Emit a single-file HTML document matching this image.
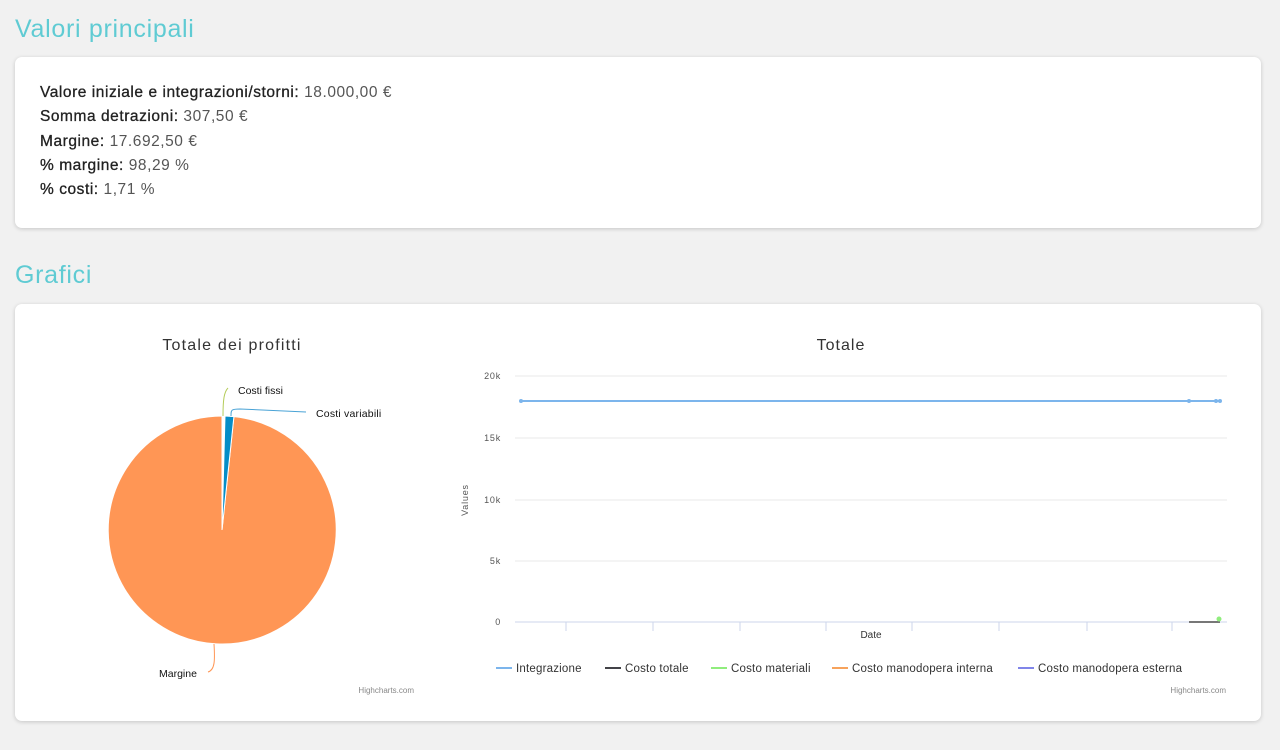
<!DOCTYPE html>
<html><head><meta charset="utf-8"><style>
body{margin:0;background:#f1f1f1;font-family:"Liberation Sans",sans-serif;width:1280px;height:750px;overflow:hidden;position:relative}
h2{position:absolute;left:15px;margin:0;font-weight:normal;color:#5fcbd3;font-size:25px;letter-spacing:.7px}
.card{position:absolute;left:15px;width:1246px;background:#fff;border-radius:7px;box-shadow:0 1px 4px rgba(0,0,0,.18)}
.v{position:absolute;left:40px;top:81px;font-size:15.5px;line-height:24.3px;color:#555;letter-spacing:.55px}
.v b{color:#222;font-weight:normal;-webkit-text-stroke:.3px #222}
svg text{font-family:"Liberation Sans",sans-serif}
</style></head><body>
<h2 style="top:15px">Valori principali</h2>
<div class="card" style="top:57px;height:171px"></div>
<div class="v">
<div><b>Valore iniziale e integrazioni/storni:</b> 18.000,00 €</div>
<div><b>Somma detrazioni:</b> 307,50 €</div>
<div><b>Margine:</b> 17.692,50 €</div>
<div><b>% margine:</b> 98,29 %</div>
<div><b>% costi:</b> 1,71 %</div>
</div>
<h2 style="top:261px">Grafici</h2>
<div class="card" style="top:304px;height:417px"></div>
<svg width="1280" height="750" style="position:absolute;left:0;top:0">
<text x="232" y="350" font-size="16" fill="#333" text-anchor="middle" letter-spacing="1.2">Totale dei profitti</text>
<path d="M222,530 L233.9,416.6 A114,114 0 1 1 222,416 Z" fill="#ff9655" stroke="#fff" stroke-width="1"/>
<path d="M222,530 L225,416 L233.9,416.6 Z" fill="#058dc7" stroke="#fff" stroke-width="1"/>
<path d="M223,416 C223,400 224,392 228,388" stroke="#b5cc5a" fill="none"/>
<path d="M231,416 C231,410 231,409 240,409 L306,412" stroke="#4aa3d6" fill="none"/>
<path d="M214,644 C215,660 215,670 208,672" stroke="#ff9655" fill="none"/>
<text x="238" y="394" font-size="10.5" fill="#111">Costi fissi</text>
<text x="316" y="417" font-size="10.5" fill="#111" letter-spacing=".2">Costi variabili</text>
<text x="159" y="677" font-size="10.5" fill="#111">Margine</text>
<text x="414" y="693" font-size="8" fill="#888" text-anchor="end">Highcharts.com</text>

<text x="841" y="350" font-size="16" fill="#333" text-anchor="middle" letter-spacing="1">Totale</text>
<g stroke="#e8e8e8"><line x1="515" x2="1227" y1="376" y2="376"/><line x1="515" x2="1227" y1="438" y2="438"/><line x1="515" x2="1227" y1="500" y2="500"/><line x1="515" x2="1227" y1="561" y2="561"/></g>
<line x1="515" x2="1227" y1="622" y2="622" stroke="#ccd6eb"/>
<g stroke="#ccd6eb"><line x1="566" x2="566" y1="622" y2="631"/><line x1="653" x2="653" y1="622" y2="631"/><line x1="740" x2="740" y1="622" y2="631"/><line x1="826" x2="826" y1="622" y2="631"/><line x1="912" x2="912" y1="622" y2="631"/><line x1="999" x2="999" y1="622" y2="631"/><line x1="1087" x2="1087" y1="622" y2="631"/><line x1="1172" x2="1172" y1="622" y2="631"/></g>
<g font-size="9" fill="#555" text-anchor="end" letter-spacing=".8"><text x="501" y="379">20k</text><text x="501" y="441">15k</text><text x="501" y="503">10k</text><text x="501" y="564">5k</text><text x="501" y="625">0</text></g>
<text transform="translate(468,500) rotate(-90)" font-size="9" fill="#555" text-anchor="middle" letter-spacing=".8">Values</text>
<text x="871" y="638" font-size="10" fill="#333" text-anchor="middle">Date</text>
<line x1="521" x2="1221" y1="401" y2="401" stroke="#7cb5ec" stroke-width="2"/>
<g fill="#7cb5ec"><circle cx="521" cy="401" r="2"/><circle cx="1189" cy="401" r="2"/><circle cx="1216" cy="401" r="2"/><circle cx="1220" cy="401" r="2"/></g>
<line x1="1189" x2="1220" y1="622" y2="622" stroke="#777" stroke-width="2"/>
<circle cx="1219" cy="619" r="2.5" fill="#90ed7d"/>
<g font-size="11.5" fill="#333" letter-spacing=".2">
<line x1="496" x2="512" y1="668" y2="668" stroke="#7cb5ec" stroke-width="2"/><text x="516" y="672">Integrazione</text>
<line x1="605" x2="621" y1="668" y2="668" stroke="#434348" stroke-width="2"/><text x="625" y="672">Costo totale</text>
<line x1="711" x2="727" y1="668" y2="668" stroke="#90ed7d" stroke-width="2"/><text x="731" y="672">Costo materiali</text>
<line x1="832" x2="848" y1="668" y2="668" stroke="#f7a35c" stroke-width="2"/><text x="852" y="672">Costo manodopera interna</text>
<line x1="1018" x2="1034" y1="668" y2="668" stroke="#8085e9" stroke-width="2"/><text x="1038" y="672">Costo manodopera esterna</text>
</g>
<text x="1226" y="693" font-size="8" fill="#888" text-anchor="end">Highcharts.com</text>
</svg>
</body></html>
